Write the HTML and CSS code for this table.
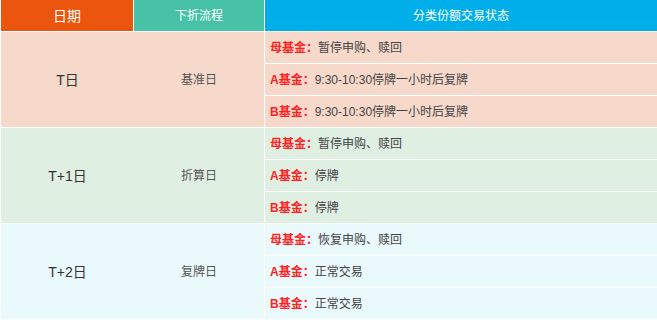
FILE: index.html
```html
<!DOCTYPE html>
<html lang="zh-CN">
<head>
<meta charset="utf-8">
<title>下折流程</title>
<link rel="stylesheet" href="styles.css">
</head>
<body>
<div class="sheet">
  <div class="hd hd-date">日期</div>
  <div class="hd hd-flow">下折流程</div>
  <div class="hd hd-state">分类份额交易状态</div>

  <div class="day g1">T日</div>
  <div class="step g1">基准日</div>
  <div class="st g1"><b>母基金：</b>暂停申购、赎回</div>
  <div class="st g1"><b>A基金：</b>9:30-10:30停牌一小时后复牌</div>
  <div class="st g1"><b>B基金：</b>9:30-10:30停牌一小时后复牌</div>

  <div class="day g2">T+1日</div>
  <div class="step g2">折算日</div>
  <div class="st g2"><b>母基金：</b>暂停申购、赎回</div>
  <div class="st g2"><b>A基金：</b>停牌</div>
  <div class="st g2"><b>B基金：</b>停牌</div>

  <div class="day g3">T+2日</div>
  <div class="step g3">复牌日</div>
  <div class="st g3"><b>母基金：</b>恢复申购、赎回</div>
  <div class="st g3"><b>A基金：</b>正常交易</div>
  <div class="st g3"><b>B基金：</b>正常交易</div>
</div>
</body>
</html>
```

FILE: styles.css
```css
html, body {
  margin: 0;
  padding: 0;
  background: #fff;
}
body {
  font-family: "Liberation Sans", "Noto Sans CJK SC", sans-serif;
  width: 657px;
  height: 320px;
  overflow: hidden;
}
.sheet {
  display: grid;
  grid-template-columns: 133px 131px 1fr;
  grid-auto-rows: 32px;
  padding-left: 1px;
}
.sheet > div {
  box-sizing: border-box;
  border-bottom: 1px solid #fff;
  display: flex;
  align-items: center;
  line-height: 16px;
  white-space: nowrap;
}
.hd {
  color: #fff;
  justify-content: center;
  font-size: 12px;
}
.hd-date {
  background: #ec550d;
  font-size: 14px;
  border-right: 1px solid #fff;
}
.hd-flow {
  background: #48c2a7;
  border-right: 1px solid #fff;
}
.hd-state {
  background: #00afea;
}
.day {
  grid-column: 1;
  grid-row: span 3;
  justify-content: center;
  font-size: 14px;
  color: #333;
}
.step {
  grid-column: 2;
  grid-row: span 3;
  justify-content: center;
  font-size: 12px;
  color: #555;
  border-right: 1px solid #fff;
}
.st {
  grid-column: 3;
  font-size: 12px;
  color: #444;
  padding-left: 5px;
}
.st b {
  color: #ff2222;
  font-weight: bold;
}
.g1 { background: #f6d9cb; }
.g2 { background: #dfefe2; }
.g3 { background: #eaf9fc; }
```
